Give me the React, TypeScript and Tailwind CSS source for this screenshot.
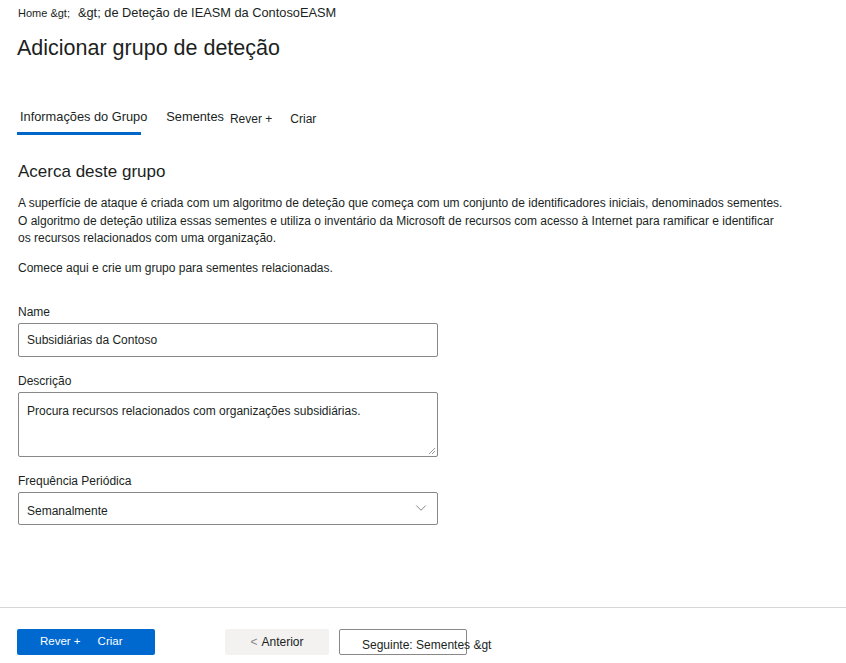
import { ChevronDown } from "lucide-react";

const font = { fontFamily: '"Liberation Sans", Arial, sans-serif' };

export default function App() {
  return (
    <div className="relative h-[663px] w-[846px] overflow-hidden bg-white text-[#201f1e] [font-family:'Liberation_Sans',Arial,sans-serif]">
      <div className="px-[18px]">
        {/* breadcrumb */}
        <div className="flex h-[26px] items-center gap-[8px] whitespace-nowrap">
          <span className="text-[11px]">Home &amp;gt;</span>
          <span className="text-[12.8px]">&amp;gt; de Deteção de IEASM da ContosoEASM</span>
        </div>
        <h1 className="mt-[8px] -ml-[1px] whitespace-nowrap text-[21.5px] leading-[28px]">Adicionar grupo de deteção</h1>

        {/* tabs */}
        <div className="mt-[45px] flex items-end whitespace-nowrap">
          <div className="flex flex-col">
            <span className="px-[2px] text-[12.8px] leading-[20px]">Informações do Grupo</span>
            <span className="mt-[5px] h-[3px] w-[124px] -ml-[1px] bg-[#0067c8]" />
          </div>
          <span className="mb-[8px] ml-[17px] text-[12.8px] leading-[20px]">Sementes</span>
          <span className="mb-[6px] ml-[6px] text-[12px] leading-[20px]">Rever +</span>
          <span className="mb-[6px] ml-[18px] text-[12px] leading-[20px]">Criar</span>
        </div>

        <h2 className="mt-[25px] text-[17px] leading-[24px]">Acerca deste grupo</h2>
        <p className="mt-[11px] whitespace-nowrap text-[12px] leading-[17.5px]">
          A superfície de ataque é criada com um algoritmo de deteção que começa com um conjunto de identificadores iniciais, denominados sementes.
          <br />
          O algoritmo de deteção utiliza essas sementes e utiliza o inventário da Microsoft de recursos com acesso à Internet para ramificar e identificar
          <br />
          os recursos relacionados com uma organização.
        </p>
        <p className="mt-[11px] text-[12px] leading-[18px]">Comece aqui e crie um grupo para sementes relacionadas.</p>

        <div className="w-[420px]" style={font}>
          <label className="mt-[27px] block text-[12px] leading-[16px]">Name</label>
          <div className="mt-[3px] flex h-[34px] items-center border border-[#8a8886] px-[8px] text-[12px] rounded-[2px]">
            Subsidiárias da Contoso
          </div>
          <label className="mt-[16px] block text-[12px] leading-[16px]">Descrição</label>
          <div className="relative mt-[3px] h-[65px] border border-[#8a8886] px-[8px] pt-[9px] text-[12px] rounded-[2px]">
            Procura recursos relacionados com organizações subsidiárias.
            <svg className="absolute bottom-[1px] right-[1px]" width="8" height="8" viewBox="0 0 8 8">
              <path d="M7 1 L1 7 M7 4 L4 7" stroke="#9a9a9a" strokeWidth="1" />
            </svg>
          </div>
          <label className="mt-[16px] block text-[12px] leading-[16px]">Frequência Periódica</label>
          <div className="mt-[3px] flex h-[33px] items-center justify-between border border-[#8a8886] pl-[8px] pr-[7px] text-[12px] rounded-[2px]">
            <span className="mt-[6px]">Semanalmente</span>
            <ChevronDown size={18} strokeWidth={1} className="text-[#605e5c]" />
          </div>
        </div>
      </div>

      {/* footer */}
      <div className="absolute left-0 right-0 top-[607px] border-t border-[#d6d6d6]">
        <div className="mt-[21px] flex items-center whitespace-nowrap pl-[17px] text-[12px]">
          <button className="flex h-[26px] w-[138px] items-center rounded-[2px] bg-[#0069d0] pl-[23px] text-[11.5px] text-white">
            <span>Rever +</span>
            <span className="ml-[17px]">Criar</span>
          </button>
          <button className="ml-[70px] flex h-[26px] w-[104px] items-center justify-center rounded-[2px] bg-[#f3f2f1] text-[#201f1e]">
            <span className="mr-[4px] text-[#8a8886]">&lt;</span>Anterior
          </button>
          <button className="ml-[10px] flex h-[26px] w-[128px] items-center rounded-[2px] border border-[#8a8886] pl-[22px] text-[#201f1e]">
            <span className="mt-[6px] overflow-visible">Seguinte: Sementes &amp;gt</span>
          </button>
        </div>
      </div>
    </div>
  );
}
